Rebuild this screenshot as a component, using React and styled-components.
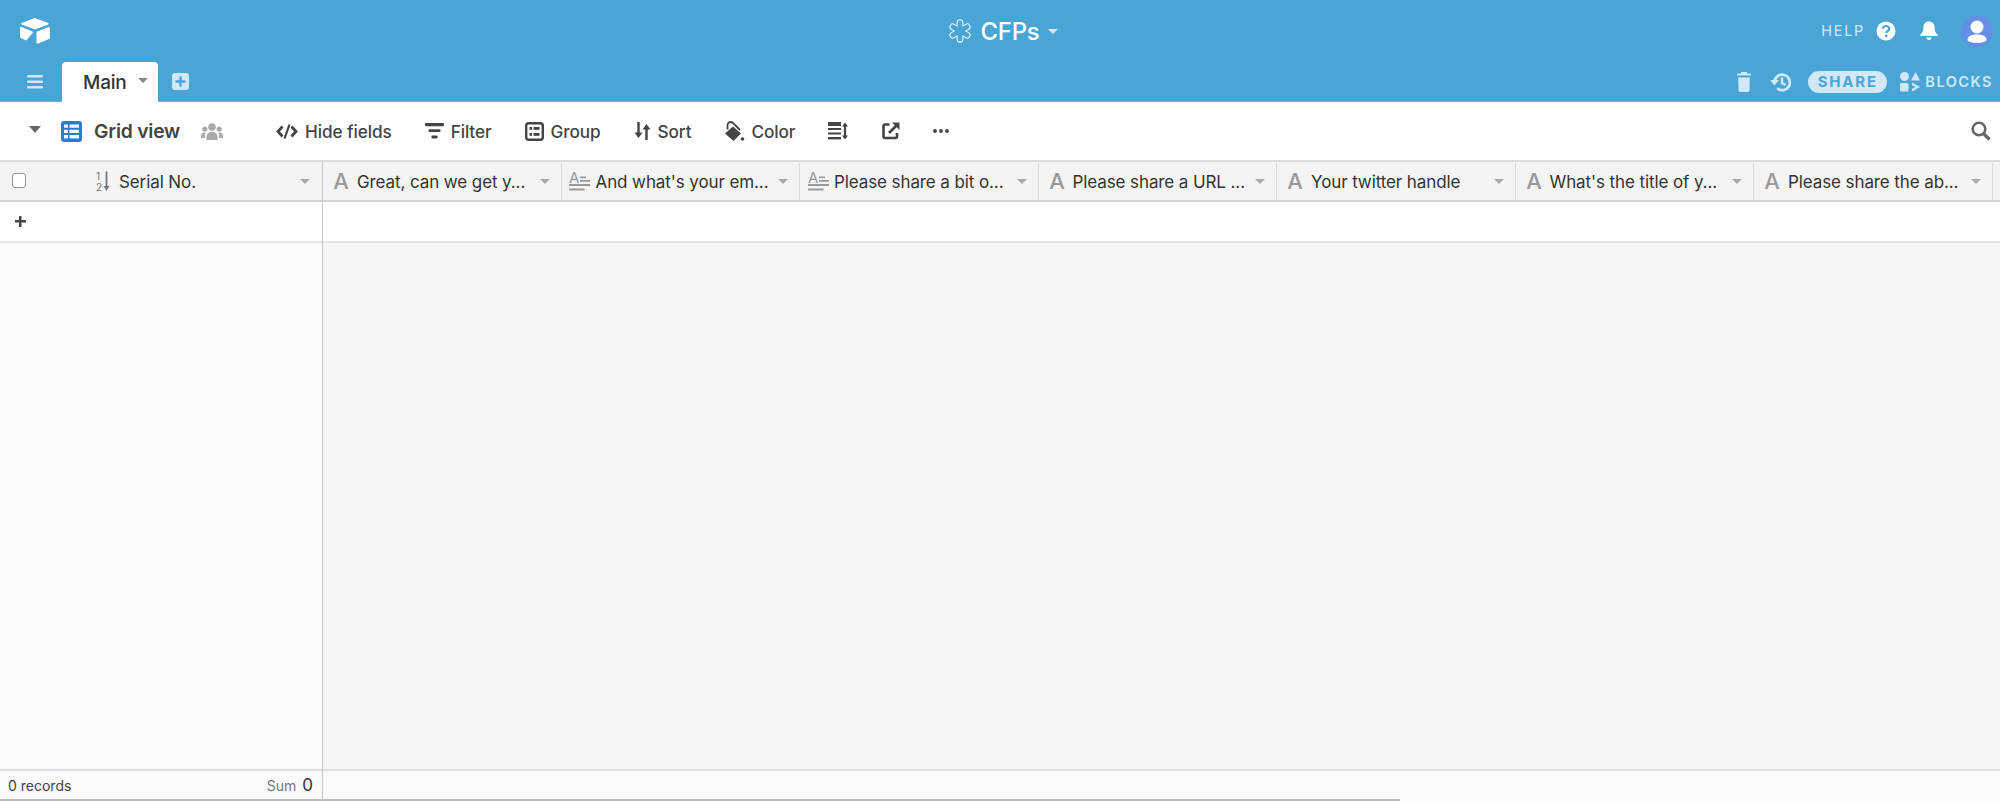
import styled, { createGlobalStyle } from "styled-components";

const GlobalStyle = createGlobalStyle`
  html, body {
    margin: 0;
    padding: 0;
    background: #fff;
    font-family: Inter, "Liberation Sans", sans-serif;
    -webkit-font-smoothing: antialiased;
  }
`;

const columns = [
  { type: "text", name: "Great, can we get y..." },
  { type: "long", name: "And what's your em..." },
  { type: "long", name: "Please share a bit o..." },
  { type: "text", name: "Please share a URL ..." },
  { type: "text", name: "Your twitter handle" },
  { type: "text", name: "What's the title of y..." },
  { type: "text", name: "Please share the ab..." },
];

const Logo = () => (
  <svg width="30" height="26" viewBox="0 0 30 26" fill="#fff">
    <path d="M13.6.5 1.6 5.1c-.6.3-.6 1.1 0 1.3l12.1 4.7c.8.3 1.7.3 2.5 0l12.1-4.7c.6-.2.6-1-.1-1.3L16.200.5c-.8-.3-1.800-.3-2.600 0z" />
    <path d="M16.500 14.500V25c0 .5.500.8.900.7l11.800-4.600c.4-.2.700-.5.700-.9V9.700c0-.5-.500-.8-1-.7l-11.700 4.600c-.4.200-.7.500-.7.900z" />
    <path d="M13.400 13.900 1 8.800c-.5-.2-1 .1-1 .6v9.800c0 .3.200.5.400.6l6 2.700 7-8.600z" />
  </svg>
);

const Hamburger = () => (
  <svg width="16" height="14" viewBox="0 0 16 14" fill="#cfe7f5">
    <rect y="0" width="16" height="2.400" rx="1" />
    <rect y="5.500" width="16" height="2.400" rx="1" />
    <rect y="11" width="16" height="2.400" rx="1" />
  </svg>
);

const AddTable = () => (
  <svg width="17" height="17" viewBox="0 0 17 17">
    <rect width="17" height="17" rx="3" fill="#d1e9f6" />
    <path d="M8.500 3.500v10M3.500 8.500h10" stroke="#48a5d6" strokeWidth="2.400" />
  </svg>
);

const BaseIcon = () => (
  <svg width="22" height="24" viewBox="0 0 24 26" fill="none">
    <g stroke="#fff" strokeWidth="7.400" strokeLinecap="round">
      <path d="M12 4v18M4.200 8.500l15.600 9M19.800 8.500l-15.600 9" />
    </g>
    <g stroke="#48a5d6" strokeWidth="5.200" strokeLinecap="round">
      <path d="M12 4v18M4.200 8.500l15.600 9M19.800 8.500l-15.600 9" />
    </g>
  </svg>
);

const HelpIcon = () => (
  <svg width="20" height="20" viewBox="0 0 20 20">
    <circle cx="10" cy="10" r="9.500" fill="#fff" />
    <path d="M6.800 7.800C6.900 5.900 8.200 5 10 5c1.900 0 3.200 1.100 3.200 2.700 0 2.400-3 2.300-3 4.300" fill="none" stroke="#48a5d6" strokeWidth="2.200" />
    <circle cx="10.200" cy="14.800" r="1.400" fill="#48a5d6" />
  </svg>
);

const BellIcon = () => (
  <svg width="18" height="20" viewBox="0 0 18 20" fill="#fff">
    <path d="M9 .5c3.500 0 5.600 2.500 5.600 6 0 4 1.200 5.300 2.900 7 .5.600.2 1.500-.7 1.500H1.200c-.9 0-1.200-.9-.7-1.500 1.700-1.700 2.900-3 2.900-7 0-3.500 2.100-6 5.600-6z" />
    <path d="M6.500 16.500h5c0 1.500-1 2.500-2.500 2.500s-2.500-1-2.500-2.500z" />
  </svg>
);

const Avatar = () => (
  <svg width="32" height="32" viewBox="0 0 32 32">
    <circle cx="16" cy="16" r="16" fill="#658fe6" />
    <circle cx="16" cy="12" r="6.500" fill="#fff" />
    <path d="M6.500 25c0-4 4-5.500 9.500-5.500s9.500 1.500 9.500 5.500c0 1-4 3-9.500 3s-9.500-2-9.500-3z" fill="#fff" />
  </svg>
);

const TrashIcon = () => (
  <svg width="14" height="20" viewBox="0 0 14 20" fill="#d1e9f6">
    <path d="M4 0h6v1.600h4v2H0v-2h4z" />
    <path d="M1.200 5.500h11.600l-.3 12.500c0 1-.8 2-2 2H3.500c-1.200 0-2-1-2-2z" />
  </svg>
);

const HistoryIcon = () => (
  <svg width="21" height="20" viewBox="0 0 21 20" fill="none">
    <path d="M4.500 10a7.700 7.700 0 1 1 2.600 6.200" stroke="#d1e9f6" strokeWidth="2.800" />
    <path d="M0 8h9L4.500 13.500z" fill="#d1e9f6" />
    <path d="M12 5.500V11l3.500 2" stroke="#d1e9f6" strokeWidth="2.400" />
  </svg>
);

const BlocksIcon = () => (
  <svg width="20" height="20" viewBox="0 0 20 20" fill="#d1e9f6">
    <circle cx="4.500" cy="4.500" r="4.500" />
    <path d="M15.500 0l4.500 8.500h-9z" />
    <rect y="11" width="8.500" height="8.500" rx="1.500" />
    <path d="M12 10.500l8 4.500-8 4.500V17l3.500-2-3.500-2z" />
  </svg>
);

const GridIcon = () => (
  <svg width="21" height="21" viewBox="0 0 21 21">
    <rect width="21" height="21" rx="3" fill="#2d7ad6" />
    <g fill="#fff">
      <rect x="3" y="3.500" width="4" height="3.200" />
      <rect x="8.500" y="3.500" width="9.500" height="3.200" />
      <rect x="3" y="8.800" width="4" height="3.200" />
      <rect x="8.500" y="8.800" width="9.500" height="3.200" />
      <rect x="3" y="14" width="4" height="3.400" />
      <rect x="8.500" y="14" width="9.500" height="3.400" />
    </g>
  </svg>
);

const PeopleIcon = () => (
  <svg width="22" height="17" viewBox="0 0 22 17" fill="#aaa">
    <circle cx="11" cy="4" r="3.800" />
    <circle cx="3.800" cy="6" r="2.600" />
    <circle cx="18.200" cy="6" r="2.600" />
    <path d="M5.500 17v-3.500C5.500 10.500 8 9 11 9s5.500 1.500 5.500 4.500V17z" />
    <path d="M0 15v-2.500C0 10.500 1.500 9.500 3.800 9.500c.6 0 .8.100.8.100-.4.900-.6 2.400-.6 5.400zM22 15v-2.500c0-2-1.500-3-3.800-3-.6 0-.8.100-.8.100.4.900.6 2.400.6 5.400z" />
  </svg>
);

const HideIcon = () => (
  <svg width="22" height="15" viewBox="0 0 22 15" fill="none" stroke="#444" strokeWidth="2.800">
    <path d="M6.500 2.500 2 7.500l4.500 5M15.500 2.500l4.500 5-4.500 5" />
    <path d="M13.500.5 8.500 14.500" strokeWidth="2.200" />
  </svg>
);

const FilterIcon = () => (
  <svg width="19" height="16" viewBox="0 0 19 16" fill="#444">
    <rect width="19" height="3.200" rx="1" />
    <rect x="3.500" y="6.300" width="12" height="2.800" rx="1" />
    <rect x="6.500" y="12.600" width="6" height="3" rx="1" />
  </svg>
);

const GroupIcon = () => (
  <svg width="19" height="19" viewBox="0 0 19 19">
    <rect x="1.200" y="1.200" width="16.600" height="16.600" rx="2.500" fill="none" stroke="#444" strokeWidth="2.400" />
    <g fill="#444">
      <rect x="4.500" y="5" width="2.600" height="2.800" />
      <rect x="8.500" y="5" width="6" height="2.800" />
      <rect x="4.500" y="11" width="2.600" height="2.800" />
      <rect x="8.500" y="11" width="6" height="2.800" />
    </g>
  </svg>
);

const SortIcon = () => (
  <svg width="17" height="18" viewBox="0 0 17 18" fill="#444" stroke="#444">
    <path d="M4.500 0v12M12.500 18V6" strokeWidth="2.400" fill="none" />
    <path d="M.5 10.500h8L4.500 16zM8.500 7.500h8L12.500 2z" stroke="none" />
  </svg>
);

const ColorIcon = () => (
  <svg width="21" height="21" viewBox="0 0 21 21">
    <path d="M9 5.500 17 12.500 9.500 20 1 12.500z" fill="#444" />
    <path d="M3.500 8.500V4.500C3.500 2 5 1 6.500 1c1.500 0 2.500.8 3.500 2L16 9" fill="none" stroke="#444" strokeWidth="1.800" />
    <circle cx="18.500" cy="18" r="1.800" fill="#444" />
  </svg>
);

const RowHeightIcon = () => (
  <svg width="20" height="18" viewBox="0 0 20 18" fill="#444">
    <rect width="13" height="4" />
    <rect y="6" width="13" height="2" />
    <rect y="10.500" width="13" height="2" />
    <rect y="15" width="13" height="2.400" />
    <path d="M17 2v14" stroke="#444" strokeWidth="2.200" />
    <path d="M14 4.500 17 .5l3 4zM14 13.500l3 4 3-4z" />
  </svg>
);

const ShareViewIcon = () => (
  <svg width="18" height="18" viewBox="0 0 18 18" fill="none" stroke="#444" strokeWidth="2.600">
    <path d="M7.500 2.500H3A1.500 1.500 0 0 0 1.500 4v10.500A1.500 1.500 0 0 0 3 16h10.500a1.500 1.500 0 0 0 1.500-1.500V11" />
    <path d="M7 11 14.500 3.500" />
    <path d="M10 .5h7.500V8z" fill="#444" stroke="none" />
  </svg>
);

const DotsIcon = () => (
  <svg width="16" height="4" viewBox="0 0 16 4" fill="#444">
    <circle cx="2" cy="2" r="1.900" />
    <circle cx="8" cy="2" r="1.900" />
    <circle cx="14" cy="2" r="1.900" />
  </svg>
);

const SearchIcon = () => (
  <svg width="20" height="20" viewBox="0 0 20 20" fill="none" stroke="#666">
    <circle cx="8" cy="8" r="6.300" strokeWidth="2.600" />
    <path d="M12.500 12.500 18.500 18.500" strokeWidth="3.400" />
  </svg>
);

const NumberIcon = () => (
  <svg width="14" height="22" viewBox="0 0 14 22">
    <text x="0" y="9" fontSize="10" fill="#777" fontFamily="Inter, sans-serif">1</text>
    <text x="0" y="19.500" fontSize="10" fill="#777" fontFamily="Inter, sans-serif">2</text>
    <path d="M10.500 .5v16" stroke="#777" strokeWidth="1.800" />
    <path d="M7.500 15h6l-3 5z" fill="#777" />
  </svg>
);

const TextIcon = () => (
  <svg width="22" height="26" viewBox="0 0 22 26">
    <text x="11" y="20" textAnchor="middle" fontSize="22" fontWeight="500" fill="#999" fontFamily="Inter, sans-serif">A</text>
  </svg>
);

const LongTextIcon = () => (
  <svg width="21" height="30" viewBox="0 -3 21 30">
    <text x="0" y="13" fontSize="15" fill="#999" fontFamily="Inter, sans-serif">A</text>
    <rect x="11" y="6.500" width="6" height="1.700" fill="#999" />
    <rect x="11" y="10" width="10" height="1.700" fill="#999" />
    <rect y="14" width="21" height="2" fill="#999" />
    <rect y="18.500" width="15.500" height="2" fill="#999" />
  </svg>
);

const App = () => {
  return (
    <Page>
      <GlobalStyle />
      <Header>
        <TopRow>
          <LogoBox>
            <Logo />
          </LogoBox>
          <BaseTitle>
            <BaseIcon />
            <BaseName>CFPs</BaseName>
            <Caret $color="#d1e9f6" $size={5} />
          </BaseTitle>
          <TopRight>
            <HelpLabel>HELP</HelpLabel>
            <HelpIcon />
            <BellBox>
              <BellIcon />
            </BellBox>
            <Avatar />
          </TopRight>
        </TopRow>
        <TabRow>
          <MenuBox>
            <Hamburger />
          </MenuBox>
          <Tab>
            Main
            <TabCaret $color="#888" $size={5} />
          </Tab>
          <AddBox>
            <AddTable />
          </AddBox>
          <TabActions>
            <TrashIcon />
            <HistoryIcon />
            <SharePill>SHARE</SharePill>
            <Blocks>
              <BlocksIcon />
              BLOCKS
            </Blocks>
          </TabActions>
        </TabRow>
      </Header>

      <Toolbar>
        <ViewCaret>
          <Caret $color="#666" $size={6.500} />
        </ViewCaret>
        <GridIcon />
        <ViewName>Grid view</ViewName>
        <PeopleBox>
          <PeopleIcon />
        </PeopleBox>
        <ToolButton $left={53}>
          <HideIcon />
          Hide fields
        </ToolButton>
        <ToolButton $left={33}>
          <FilterIcon />
          Filter
        </ToolButton>
        <ToolButton $left={33}>
          <GroupIcon />
          Group
        </ToolButton>
        <ToolButton $left={33}>
          <SortIcon />
          Sort
        </ToolButton>
        <ToolButton $left={33} $gap={6}>
          <ColorIcon />
          Color
        </ToolButton>
        <ToolButton $left={33}>
          <RowHeightIcon />
        </ToolButton>
        <ToolButton $left={34}>
          <ShareViewIcon />
        </ToolButton>
        <ToolButton $left={33}>
          <DotsIcon />
        </ToolButton>
        <SearchBox>
          <SearchIcon />
        </SearchBox>
      </Toolbar>

      <GridArea>
        <LeftPane>
          <HeaderRow $right={12}>
            <CheckBox />
            <SerialCell>
              <NumberIcon />
              <ColumnName>Serial No.</ColumnName>
            </SerialCell>
            <Caret $color="#aaa" $size={5} />
          </HeaderRow>
          <AddRow>
            <PlusSign />
          </AddRow>
          <Spacer />
          <Footer>
            <Records>0 records</Records>
            <SumLabel>Sum</SumLabel>
            <SumValue>0</SumValue>
          </Footer>
        </LeftPane>
        <RightPane>
          <HeaderRow>
            {columns.map((col) => (
              <Column key={col.name}>
                <IconSlot>{col.type === "text" ? <TextIcon /> : <LongTextIcon />}</IconSlot>
                <ColumnName>{col.name}</ColumnName>
                <Caret $color="#aaa" $size={5} />
              </Column>
            ))}
          </HeaderRow>
          <AddRow />
          <Spacer />
          <Footer />
        </RightPane>
        <ScrollBar />
      </GridArea>
    </Page>
  );
};

export default App;

const Page = styled.div`
  width: 2000px;
  height: 801px;
  display: flex;
  flex-direction: column;
  overflow: hidden;
`;

const Header = styled.header`
  height: 102px;
  flex: none;
  box-sizing: border-box;
  background: #48a5d6;
  border-bottom: 1px solid #5db4e3;
  display: flex;
  flex-direction: column;
`;

const TopRow = styled.div`
  height: 62px;
  display: grid;
  grid-template-columns: 1fr auto 1fr;
  align-items: center;
`;

const LogoBox = styled.div`
  padding-left: 20px;
  display: flex;
  margin-top: -1px;
`;

const BaseTitle = styled.div`
  display: flex;
  align-items: center;
  color: #fff;
  margin-left: 7px;
`;

const BaseName = styled.span`
  font-size: 24px;
  font-weight: 500;
  margin: 0 9px 0 10px;
  letter-spacing: -0.3px;
`;

const TopRight = styled.div`
  display: flex;
  align-items: center;
  justify-content: flex-end;
  padding-right: 7px;
  margin-top: -1px;
`;

const HelpLabel = styled.span`
  color: #d1e9f6;
  font-size: 14.500px;
  letter-spacing: 1.700px;
  margin-right: 11px;
`;

const BellBox = styled.span`
  display: flex;
  margin: 0 23px 0 24px;
`;

const TabRow = styled.div`
  flex: 1;
  display: flex;
  align-items: stretch;
`;

const MenuBox = styled.div`
  width: 62px;
  box-sizing: border-box;
  padding-left: 27px;
  display: flex;
  align-items: center;
`;

const Tab = styled.div`
  width: 96px;
  box-sizing: border-box;
  background: #fff;
  border-radius: 4px 4px 0 0;
  padding-left: 21px;
  margin-bottom: -1px;
  display: flex;
  align-items: center;
  gap: 11px;
  font-size: 19px;
  font-weight: 500;
  color: #333;
  letter-spacing: -0.2px;
`;

const AddBox = styled.div`
  margin-left: 14px;
  display: flex;
  align-items: center;
`;

const TabActions = styled.div`
  margin-left: auto;
  padding-right: 7px;
  display: flex;
  align-items: center;
  gap: 20px;
  & > svg:first-child {
    margin-right: -1px;
  }
`;

const SharePill = styled.span`
  width: 79px;
  height: 22px;
  background: #d1e9f6;
  color: #48a5d6;
  border-radius: 11px;
  display: flex;
  align-items: center;
  justify-content: center;
  font-size: 15px;
  font-weight: 700;
  letter-spacing: 1.800px;
  margin: 0 -7px 0 -3px;
`;

const Blocks = styled.span`
  display: flex;
  align-items: center;
  gap: 5px;
  color: #d1e9f6;
  font-size: 14.500px;
  font-weight: 600;
  letter-spacing: 1.500px;
`;

const Caret = styled.span`
  flex: none;
  width: 0;
  height: 0;
  border-left: ${(p) => p.$size}px solid transparent;
  border-right: ${(p) => p.$size}px solid transparent;
  border-top: ${(p) => p.$size * 1.15}px solid ${(p) => p.$color};
`;

const TabCaret = styled(Caret)`
  margin-top: -4px;
`;

const Toolbar = styled.div`
  height: 58px;
  flex: none;
  padding-left: 29px;
  display: flex;
  align-items: center;
  color: #444;
  background: #fff;
`;

const ViewCaret = styled.span`
  display: flex;
  margin-right: 20px;
  margin-top: -3px;
`;

const ViewName = styled.span`
  font-size: 19.300px;
  font-weight: 600;
  margin-left: 12px;
  letter-spacing: -0.2px;
`;

const PeopleBox = styled.span`
  display: flex;
  margin-left: 21px;
`;

const ToolButton = styled.span`
  display: flex;
  align-items: center;
  gap: ${(p) => p.$gap || 7}px;
  margin-left: ${(p) => p.$left}px;
  font-size: 17.200px;
  font-weight: 500;
  letter-spacing: -0.1px;
`;

const SearchBox = styled.span`
  display: flex;
  margin-left: auto;
  padding-right: 9px;
`;

const GridArea = styled.div`
  position: relative;
  flex: 1;
  display: flex;
  min-height: 0;
  border-top: 2px solid #dcdcdc;
`;

const LeftPane = styled.div`
  width: 323px;
  flex: none;
  box-sizing: border-box;
  display: flex;
  flex-direction: column;
  background: #fafafa;
  border-right: 1px solid #c8c8c8;
`;

const RightPane = styled.div`
  flex: 1;
  min-width: 0;
  display: flex;
  flex-direction: column;
  background: #f5f5f5;
`;

const HeaderRow = styled.div`
  height: 40px;
  flex: none;
  box-sizing: border-box;
  display: flex;
  align-items: center;
  background: #f4f4f4;
  border-bottom: 2px solid #d4d4d4;
  padding-top: 1px;
  padding-right: ${(p) => p.$right || 0}px;
`;

const CheckBox = styled.span`
  flex: none;
  width: 14px;
  height: 15px;
  box-sizing: border-box;
  margin: -3px 0 0 12px;
  background: #fff;
  border: 1px solid #8f959b;
  border-radius: 3px;
`;

const SerialCell = styled.div`
  flex: 1;
  min-width: 0;
  display: flex;
  align-items: center;
  gap: 9px;
  padding-left: 70px;
`;

const Column = styled.div`
  flex: none;
  width: 238.500px;
  height: 100%;
  box-sizing: border-box;
  display: flex;
  align-items: center;
  padding: 0 11px 0 6px;
  border-right: 1px solid #dcdcdc;
`;

const IconSlot = styled.span`
  display: flex;
  justify-content: center;
  width: 24px;
  margin-right: 4px;
  flex: none;
`;

const ColumnName = styled.span`
  flex: 1;
  white-space: nowrap;
  font-size: 17px;
  color: #333;
  letter-spacing: -0.1px;
`;

const AddRow = styled.div`
  height: 41px;
  flex: none;
  box-sizing: border-box;
  display: flex;
  align-items: center;
  background: #fff;
  border-bottom: 2px solid #e4e4e4;
  padding-left: 15px;
`;

const PlusSign = styled.span`
  position: relative;
  width: 11px;
  height: 11px;
  background:
    linear-gradient(#444, #444) center / 100% 2.500px no-repeat,
    linear-gradient(#444, #444) center / 2.500px 100% no-repeat;
`;

const Spacer = styled.div`
  flex: 1;
`;

const Footer = styled.div`
  height: 32px;
  flex: none;
  box-sizing: border-box;
  display: flex;
  align-items: center;
  padding: 0 9px 2px 8px;
  background: #fafafa;
  border-top: 2px solid #dedede;
`;

const Records = styled.span`
  font-size: 14px;
  color: #444;
  margin-right: auto;
`;

const SumLabel = styled.span`
  font-size: 14px;
  color: #777;
  margin-right: 6px;
`;

const SumValue = styled.span`
  font-size: 17px;
  color: #333;
`;

const ScrollBar = styled.div`
  position: absolute;
  left: 0;
  bottom: 0;
  width: 1400px;
  height: 2px;
  background: #bbb;
`;
